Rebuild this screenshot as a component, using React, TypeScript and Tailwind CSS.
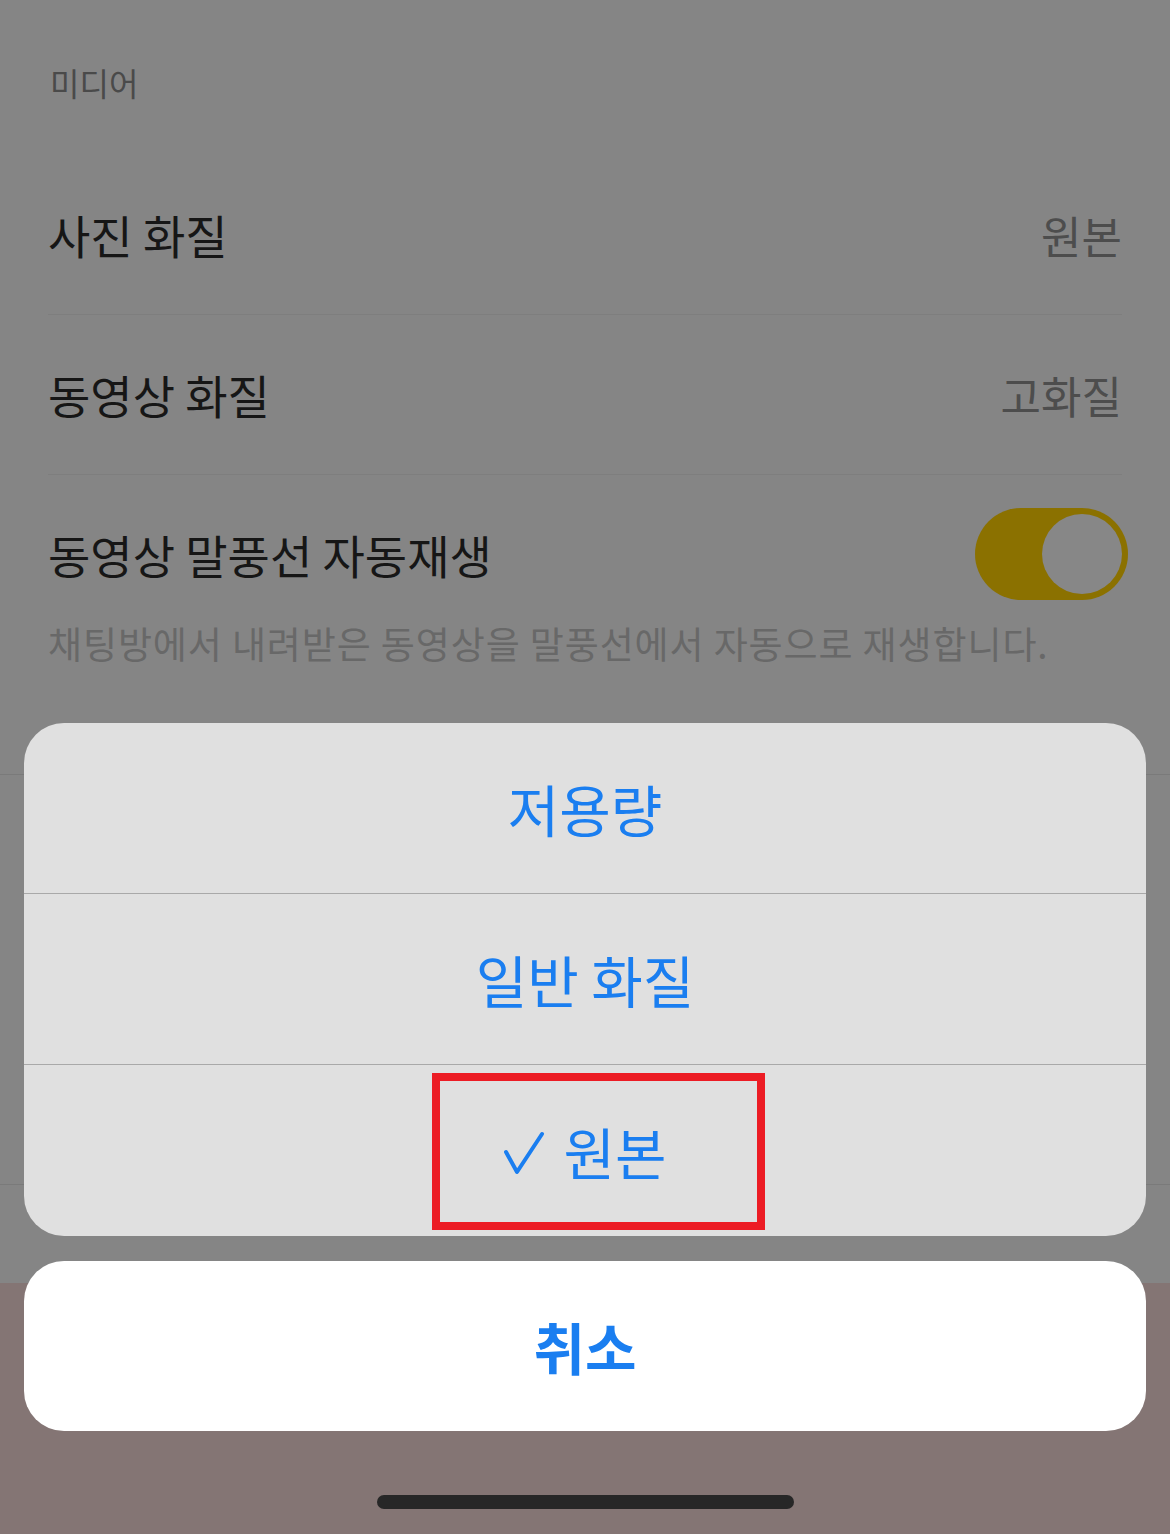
import * as React from 'react';

const FONT = '"Noto Sans CJK KR", "Noto Sans", sans-serif';

function SettingRow({ label, value }: { label: string; value: string }) {
  return (
    <div className="mx-[48px] flex h-[160px] items-center justify-between border-b border-[#7e7e7e]">
      <span className="text-[46px] text-[#161616]">{label}</span>
      <span className="text-[44px] text-[#4d4d4d]">{value}</span>
    </div>
  );
}

function CheckMark() {
  return (
    <svg width="42" height="44" viewBox="0 0 42 44" fill="none" className="mr-[18px] mt-[4px]">
      <path d="M3 21 L14 41 L39 3" stroke="#1a7ef0" strokeWidth="4" strokeLinecap="round" strokeLinejoin="round" />
    </svg>
  );
}

function SheetItem({ children, last }: { children: React.ReactNode; last?: boolean }) {
  return (
    <div
      className={
        'relative flex h-[171px] items-center justify-center text-[56px] text-[#1a7ef0] ' +
        (last ? '' : 'border-b border-[#a9a9a9]')
      }
    >
      {children}
    </div>
  );
}

export default function App() {
  return (
    <div className="relative flex h-[1534px] w-[1170px] flex-col overflow-hidden bg-[#858585]" style={{ fontFamily: FONT }}>
      {/* dimmed settings page */}
      <div className="flex h-[155px] items-start px-[50px] pt-[58px]">
        <span className="text-[32px] text-[#4a4a4a]">미디어</span>
      </div>
      <SettingRow label="사진 화질" value="원본" />
      <SettingRow label="동영상 화질" value="고화질" />
      <div className="flex h-[300px] flex-col border-b border-[#7a7a7a] px-[48px] pt-[33px]">
        <div className="flex items-center justify-between">
          <span className="text-[46px] text-[#161616]">동영상 말풍선 자동재생</span>
          <div className="mr-[-6px] flex h-[92px] w-[153px] items-center justify-end rounded-full bg-[#8b7100] pr-[6px]">
            <div className="h-[80px] w-[80px] rounded-full bg-[#878787]" />
          </div>
        </div>
        <span className="mt-[16px] text-[37px] tracking-[0.9px] text-[#686868]">
          채팅방에서 내려받은 동영상을 말풍선에서 자동으로 재생합니다.
        </span>
      </div>
      <div className="h-[410px] border-b border-[#7a7a7a]" />
      <div className="h-[98px]" />
      <div className="flex-1 bg-[#847574]" />

      {/* action sheet */}
      <div className="absolute inset-x-0 bottom-0 flex flex-col px-[24px] pb-[103px]">
        <div className="overflow-hidden rounded-[40px] bg-[#e0e0e0]">
          <SheetItem>저용량</SheetItem>
          <SheetItem>일반 화질</SheetItem>
          <SheetItem last>
            <CheckMark />
            <span>원본</span>
            <div className="absolute left-[408px] top-[8px] h-[157px] w-[333px] border-[8px] border-[#ec1c24]" />
          </SheetItem>
        </div>
        <div className="mt-[25px] flex h-[170px] items-center justify-center rounded-[40px] bg-white">
          <span className="text-[56px] font-bold text-[#1a7ef0]">취소</span>
        </div>
      </div>

      {/* home indicator */}
      <div className="absolute bottom-[25px] left-[377px] h-[14px] w-[417px] rounded-full bg-[#272727]" />
    </div>
  );
}
